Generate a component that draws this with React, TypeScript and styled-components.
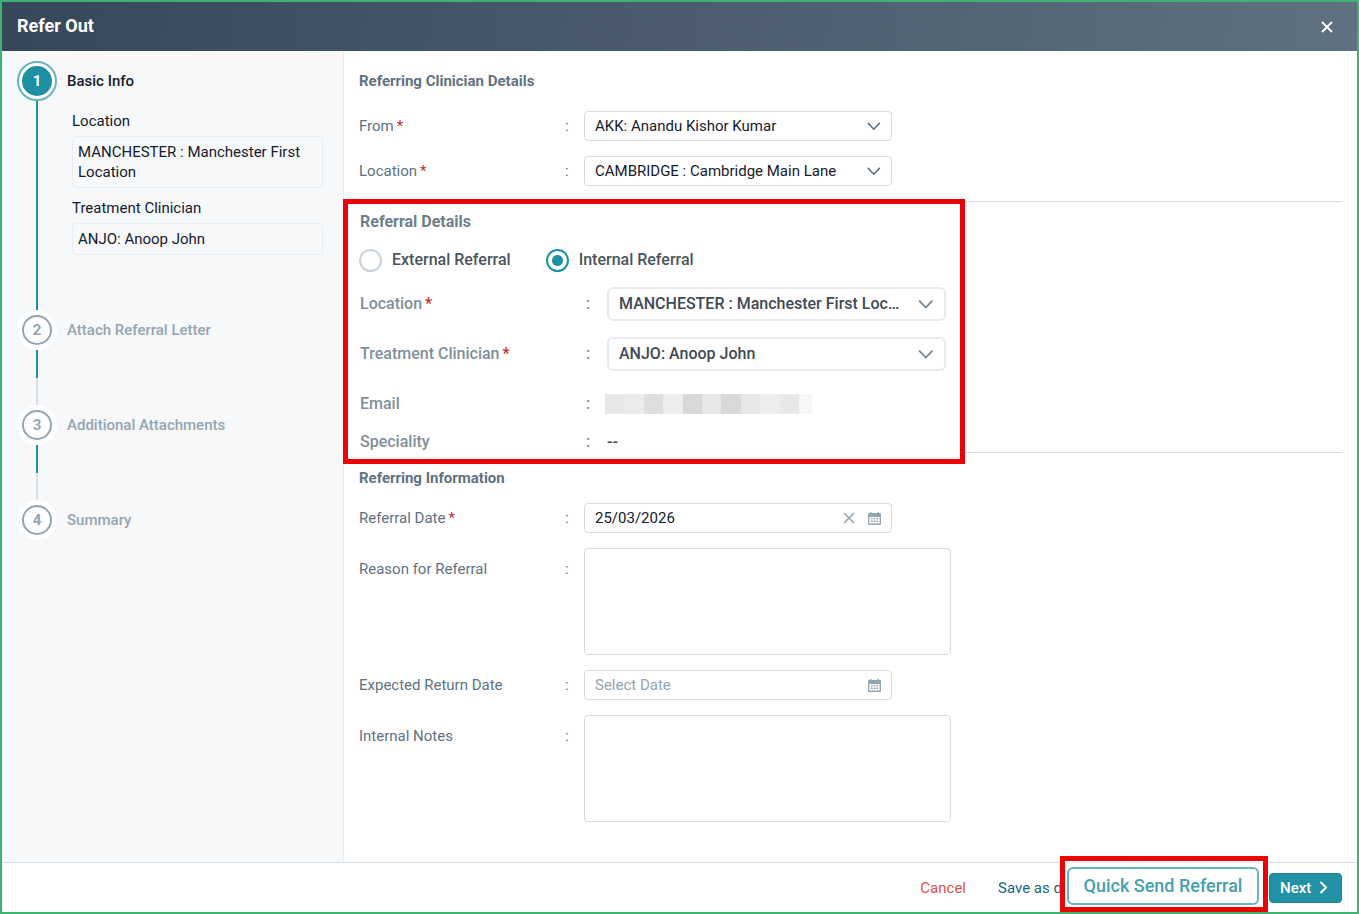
import React, { useState } from 'react';
import styled, { createGlobalStyle, css } from 'styled-components';

const c = {
  frame: '#3cb371',
  teal: '#1f8fa3',
  ink: '#15202b',
  label: '#5f7282',
  muted: '#94a5b2',
  line: '#d3dde6',
  callout: '#ea0606',
};

const GlobalStyle = createGlobalStyle`
  *, *::before, *::after { box-sizing: border-box; }
  body { margin: 0; background: #fff; }
  body, button, input, select, textarea {
    font-family: Roboto, "Liberation Sans", sans-serif;
    font-size: 15px;
    line-height: 20px;
    color: ${c.ink};
  }
`;

const Dialog = styled.div`
  display: flex;
  flex-direction: column;
  min-height: 100vh;
  border: 2px solid ${c.frame};
  background: #fff;
`;

const TitleBar = styled.header`
  display: flex;
  align-items: center;
  justify-content: space-between;
  height: 49px;
  padding: 0 20px 0 15px;
  background: linear-gradient(100deg, #37475a 0%, #5f7081 100%);
`;

const Title = styled.h1`
  margin: 0;
  padding-bottom: 2px;
  font-size: 18px;
  line-height: 24px;
  font-weight: 700;
  color: #fff;
`;

const IconButton = styled.button`
  display: inline-flex;
  align-items: center;
  justify-content: center;
  width: 20px;
  height: 20px;
  padding: 0;
  border: 0;
  background: none;
  color: ${c.muted};
  cursor: pointer;
`;

const CloseButton = styled(IconButton)`
  color: #fff;
`;

const Body = styled.div`
  display: flex;
  flex: 1;
`;

const Sidebar = styled.aside`
  flex: 0 0 342px;
  padding: 10px 20px 10px 15px;
  border-right: 1px solid #e6ebef;
  background: #f6f8fa;
`;

const Steps = styled.ol`
  margin: 0;
  padding: 0;
  list-style: none;
`;

const Step = styled.li`
  display: grid;
  grid-template-columns: 40px 1fr;
  column-gap: 10px;
  min-height: 95px;
`;

const Rail = styled.div`
  display: flex;
  flex-direction: column;
  align-items: center;
`;

const Halo = styled.div<{ $active: boolean }>`
  display: flex;
  align-items: center;
  justify-content: center;
  width: 40px;
  height: 40px;
  border-radius: 50%;
  border: 2px solid ${(p) => (p.$active ? '#69b4c1' : '#fff')};
  background: #fff;
`;

const Bubble = styled.span<{ $active: boolean }>`
  display: flex;
  align-items: center;
  justify-content: center;
  width: 30px;
  height: 30px;
  border-radius: 50%;
  border: 2px solid ${(p) => (p.$active ? c.teal : c.muted)};
  background: ${(p) => (p.$active ? c.teal : '#fff')};
  color: ${(p) => (p.$active ? '#fff' : c.muted)};
  font-weight: 700;
`;

const Connector = styled.div<{ $done: boolean }>`
  flex: 1;
  width: 2px;
  background: ${(p) =>
    p.$done ? c.teal : `linear-gradient(${c.teal} 50%, #d8dfe8 50%)`};
`;

const StepTitle = styled.h2<{ $active: boolean }>`
  margin: 0;
  font-size: 15px;
  line-height: 40px;
  font-weight: 500;
  color: ${(p) => (p.$active ? c.ink : c.muted)};
`;

const StepSummary = styled.dl`
  margin: 0;
  padding: 10px 0 55px 5px;
`;

const SummaryTerm = styled.dt`
  margin-bottom: 5px;
`;

const SummaryValue = styled.dd`
  margin: 0;
  padding: 5px;
  border: 1px solid #e9edf0;
  border-radius: 4px;

  & + dt {
    margin-top: 10px;
  }
`;

const Main = styled.main`
  flex: 1;
  min-width: 0;
  padding: 0 15px;
`;

const Section = styled.section<{ $top?: number }>`
  padding: ${(p) => p.$top ?? 15}px 0 15px;
`;

const RuledSection = styled.section`
  border-top: 1px solid ${c.line};
  border-bottom: 1px solid ${c.line};
`;

const calloutFrame = css`
  position: relative;
  z-index: 1;
  border: 5px solid ${c.callout};
  background: #fff;
`;

const DetailsCallout = styled.div`
  ${calloutFrame}
  max-width: 622px;
  margin: -3px 0 -12px -16px;
  padding: 8px 14px 7px 12px;
  font-size: 16px;
  font-weight: 500;
`;

const SectionTitle = styled.h2<{ $large?: boolean; $gap?: number }>`
  margin: 0 0 ${(p) => p.$gap ?? 15}px;
  font-size: ${(p) => (p.$large ? 16 : 15)}px;
  line-height: 20px;
  font-weight: 700;
  color: ${(p) => (p.$large ? '#6d7f8d' : c.label)};
`;

const Rows = styled.div`
  display: grid;
  row-gap: 15px;
`;

const Row = styled.div<{ $large?: boolean; $tall?: boolean }>`
  display: grid;
  grid-template-columns: ${(p) => (p.$large ? '226px 21px 1fr' : '206px 19px 1fr')};
  align-items: ${(p) => (p.$tall ? 'start' : 'center')};
  color: ${(p) => (p.$large ? '#7f8f9b' : c.label)};

  & > :nth-child(-n + 2) {
    padding-top: ${(p) => (p.$tall ? 11 : 0)}px;
  }
`;

const LargeRows = styled(Rows)`
  row-gap: 16px;
`;

const Readouts = styled.div`
  display: grid;
  row-gap: 18px;
  margin-top: 23px;
`;

const Required = styled.span`
  margin-left: 3px;
  color: #c22f2f;
`;

const Control = styled.div<{ $large?: boolean }>`
  position: relative;
  max-width: ${(p) => (p.$large ? 339 : 308)}px;
`;

const fieldBox = css`
  display: block;
  width: 100%;
  border: 1px solid ${c.line};
  border-radius: 4px;
  background: #fff;
  outline: none;
`;

const Select = styled.select<{ $large?: boolean }>`
  ${fieldBox}
  appearance: none;
  height: ${(p) => (p.$large ? 34 : 30)}px;
  padding: 0 ${(p) => (p.$large ? 40 : 32)}px 0 10px;
  font-size: ${(p) => (p.$large ? 16 : 15)}px;
  text-overflow: ellipsis;
  ${(p) =>
    p.$large &&
    css`
      border: 2px solid #e6ebf1;
      border-radius: 6px;
      color: #3f4a53;
      font-weight: 500;
    `}
`;

const Chevron = styled.svg<{ $large?: boolean }>`
  position: absolute;
  top: 50%;
  right: ${(p) => (p.$large ? 12 : 11)}px;
  transform: translateY(-50%);
  pointer-events: none;
  fill: none;
  stroke: ${(p) => (p.$large ? '#748694' : c.label)};
`;

const TextBox = styled.input`
  ${fieldBox}
  height: 30px;
  padding: 0 60px 0 10px;

  &::placeholder {
    color: ${c.muted};
    opacity: 1;
  }
`;

const BoxActions = styled.div`
  position: absolute;
  top: 5px;
  right: 8px;
  display: flex;
  gap: 5px;
`;

const TextArea = styled.textarea`
  ${fieldBox}
  max-width: 367px;
  height: 107px;
  padding: 5px 10px;
  resize: none;
`;

const RadioGroup = styled.div`
  display: flex;
  gap: 36px;
  margin-bottom: 15px;
  height: 24px;
`;

const RadioLabel = styled.label`
  display: flex;
  align-items: center;
  gap: 10px;
  color: #4b555d;
`;

const Radio = styled.input`
  appearance: none;
  width: 23px;
  height: 23px;
  margin: 0 0 0 -1px;
  border: 2px solid #c9d2da;
  border-radius: 50%;
  background: #fff;

  &:checked {
    border-color: ${c.teal};
    background: radial-gradient(circle, ${c.teal} 5px, #fff 6px);
  }
`;

const Mosaic = styled.div`
  display: flex;
  width: 207px;
  height: 20px;
  margin-left: -2px;
`;

const Tile = styled.span<{ $tone: string }>`
  flex: 1;
  background: ${(p) => p.$tone};

  &:last-child {
    flex: 0 0 13px;
  }
`;

const Dashes = styled.span`
  color: #3f4a53;
`;

const Footer = styled.footer`
  display: flex;
  align-items: center;
  justify-content: flex-end;
  height: 50px;
  padding-right: 15px;
  border-top: 1px solid ${c.line};
`;

const LinkButton = styled.button<{ $danger?: boolean }>`
  padding: 0;
  margin-right: 32px;
  border: 0;
  background: none;
  color: ${(p) => (p.$danger ? '#d9534f' : '#15697a')};
  white-space: nowrap;
  cursor: pointer;
`;

const SaveButton = styled(LinkButton)`
  width: 62px;
  margin-right: 0;
  text-align: left;
`;

const SendCallout = styled.div`
  ${calloutFrame}
  align-self: flex-end;
  flex: none;
  margin-right: 1px;
  padding: 6px 4px 2px 2px;
`;

const SendButton = styled.button`
  display: block;
  width: 192px;
  height: 38px;
  padding: 0;
  border: 2px solid #69b4c1;
  border-radius: 6px;
  background: #fff;
  color: #45a0b0;
  font-size: 18px;
  font-weight: 500;
  white-space: nowrap;
  cursor: pointer;
`;

const NextButton = styled.button`
  display: flex;
  align-items: center;
  gap: 8px;
  width: 73px;
  height: 30px;
  padding: 0 10px;
  border: 1px solid #1d8294;
  border-radius: 4px;
  background: #2391a5;
  color: #fff;
  font-weight: 500;
  cursor: pointer;
`;

const Arrow = ({ large }: { large?: boolean }) => (
  <Chevron
    $large={large}
    width={large ? 16 : 14}
    height={large ? 10 : 9}
    viewBox="0 0 14 9"
    strokeWidth="1.6"
    aria-hidden="true"
  >
    <path d="M0.8 1.4 6.8 7.7 12.8 1.4" />
  </Chevron>
);

const Cross = ({ size, weight }: { size: number; weight: number }) => (
  <svg width={size} height={size} viewBox="0 0 12 12" fill="none" stroke="currentColor" strokeWidth={weight} aria-hidden="true">
    <path d="M1 1 11 11M11 1 1 11" />
  </svg>
);

const CalendarIcon = () => (
  <svg width="13" height="13" viewBox="0 0 13 13" aria-hidden="true">
    <path
      fill="currentColor"
      fillRule="evenodd"
      d="M2 0h1.5v1h6V0H11v1h1a1 1 0 0 1 1 1v10a1 1 0 0 1-1 1H1a1 1 0 0 1-1-1V2a1 1 0 0 1 1-1h1zM1.4 5v6.6h10.2V5z"
    />
    <path
      fill="currentColor"
      d="M3 6h1.7v1.3H3zM5.6 6h1.8v1.3H5.6zM8.3 6H10v1.3H8.3zM3 8.6h1.7v1.3H3zM5.6 8.6h1.8v1.3H5.6zM8.3 8.6H10v1.3H8.3z"
    />
  </svg>
);

type SelectRowProps = {
  id: string;
  label: string;
  value: string;
  large?: boolean;
};

const SelectRow = ({ id, label, value, large }: SelectRowProps) => (
  <Row $large={large}>
    <label htmlFor={id}>
      {label}
      <Required>*</Required>
    </label>
    <span>:</span>
    <Control $large={large}>
      <Select id={id} $large={large} defaultValue={value}>
        <option>{value}</option>
      </Select>
      <Arrow large={large} />
    </Control>
  </Row>
);

type DateRowProps = {
  id: string;
  label: string;
  initial?: string;
  required?: boolean;
};

const DateRow = ({ id, label, initial = '', required }: DateRowProps) => {
  const [value, setValue] = useState(initial);
  return (
    <Row>
      <label htmlFor={id}>
        {label}
        {required && <Required>*</Required>}
      </label>
      <span>:</span>
      <Control>
        <TextBox id={id} placeholder="Select Date" value={value} onChange={(e) => setValue(e.target.value)} />
        <BoxActions>
          {value && (
            <IconButton type="button" aria-label="Clear date" onClick={() => setValue('')}>
              <Cross size={12} weight={1.5} />
            </IconButton>
          )}
          <IconButton type="button" aria-label="Open calendar">
            <CalendarIcon />
          </IconButton>
        </BoxActions>
      </Control>
    </Row>
  );
};

const NotesRow = ({ id, label }: { id: string; label: string }) => (
  <Row $tall>
    <label htmlFor={id}>{label}</label>
    <span>:</span>
    <TextArea id={id} />
  </Row>
);

const steps = ['Basic Info', 'Attach Referral Letter', 'Additional Attachments', 'Summary'];

const tones = ['#e8e8ea', '#ebedec', '#dedee1', '#ecedee', '#d9d9dc', '#e6e7e9', '#d9d9dc', '#e6e8e7', '#ecedef', '#e7e9e8', '#f7f7f7'];

export default function App() {
  const [kind, setKind] = useState('internal');

  return (
    <>
      <GlobalStyle />
      <Dialog>
        <TitleBar>
          <Title>Refer Out</Title>
          <CloseButton type="button" aria-label="Close">
            <Cross size={12} weight={1.8} />
          </CloseButton>
        </TitleBar>

        <Body>
          <Sidebar>
            <Steps>
              {steps.map((name, i) => (
                <Step key={name}>
                  <Rail>
                    <Halo $active={i === 0}>
                      <Bubble $active={i === 0}>{i + 1}</Bubble>
                    </Halo>
                    {i < steps.length - 1 && <Connector $done={i === 0} />}
                  </Rail>
                  <div>
                    <StepTitle $active={i === 0}>{name}</StepTitle>
                    {i === 0 && (
                      <StepSummary>
                        <SummaryTerm>Location</SummaryTerm>
                        <SummaryValue>MANCHESTER : Manchester First Location</SummaryValue>
                        <SummaryTerm>Treatment Clinician</SummaryTerm>
                        <SummaryValue>ANJO: Anoop John</SummaryValue>
                      </StepSummary>
                    )}
                  </div>
                </Step>
              ))}
            </Steps>
          </Sidebar>

          <Main>
            <Section $top={20}>
              <SectionTitle $gap={20}>Referring Clinician Details</SectionTitle>
              <Rows>
                <SelectRow id="from" label="From" value="AKK: Anandu Kishor Kumar" />
                <SelectRow id="from-location" label="Location" value="CAMBRIDGE : Cambridge Main Lane" />
              </Rows>
            </Section>

            <RuledSection>
              <DetailsCallout>
                <SectionTitle $large $gap={16}>
                  Referral Details
                </SectionTitle>
                <RadioGroup role="radiogroup" aria-label="Referral type">
                  <RadioLabel>
                    <Radio type="radio" name="kind" checked={kind === 'external'} onChange={() => setKind('external')} />
                    External Referral
                  </RadioLabel>
                  <RadioLabel>
                    <Radio type="radio" name="kind" checked={kind === 'internal'} onChange={() => setKind('internal')} />
                    Internal Referral
                  </RadioLabel>
                </RadioGroup>
                <LargeRows>
                  <SelectRow large id="to-location" label="Location" value="MANCHESTER : Manchester First Location" />
                  <SelectRow large id="to-clinician" label="Treatment Clinician" value="ANJO: Anoop John" />
                </LargeRows>
                <Readouts>
                  <Row $large>
                    <span>Email</span>
                    <span>:</span>
                    <Mosaic>
                      {tones.map((tone, i) => (
                        <Tile key={i} $tone={tone} />
                      ))}
                    </Mosaic>
                  </Row>
                  <Row $large>
                    <span>Speciality</span>
                    <span>:</span>
                    <Dashes>--</Dashes>
                  </Row>
                </Readouts>
              </DetailsCallout>
            </RuledSection>

            <Section>
              <SectionTitle>Referring Information</SectionTitle>
              <Rows>
                <DateRow id="referral-date" label="Referral Date" initial="25/03/2026" required />
                <NotesRow id="reason" label="Reason for Referral" />
                <DateRow id="return-date" label="Expected Return Date" />
                <NotesRow id="notes" label="Internal Notes" />
              </Rows>
            </Section>
          </Main>
        </Body>

        <Footer>
          <LinkButton type="button" $danger>
            Cancel
          </LinkButton>
          <SaveButton type="button">Save as draft</SaveButton>
          <SendCallout>
            <SendButton type="button">Quick Send Referral</SendButton>
          </SendCallout>
          <NextButton type="button">
            Next
            <svg width="9" height="13" viewBox="0 0 9 13" fill="none" stroke="currentColor" strokeWidth="2" aria-hidden="true">
              <path d="M1.5 1 7 6.5 1.5 12" />
            </svg>
          </NextButton>
        </Footer>
      </Dialog>
    </>
  );
}
